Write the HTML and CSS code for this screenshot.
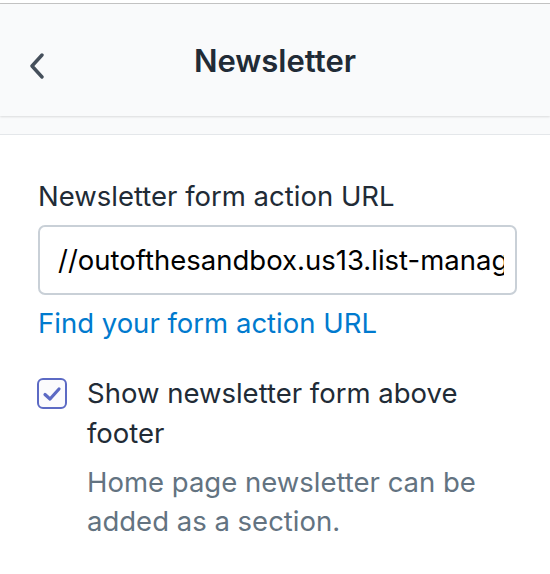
FILE: index.html
```html
<!DOCTYPE html>
<html>
<head>
<meta charset="utf-8">
<link rel="stylesheet" href="styles.css">
</head>
<body>
<div class="topline"></div>
<header class="header">
  <button class="back" aria-label="Back">
    <svg width="16" height="26" viewBox="0 0 16 26"><path d="M13 2 L3 13 L13 24" fill="none" stroke="#454f5b" stroke-width="3.4" stroke-linecap="round" stroke-linejoin="round"/></svg>
  </button>
  <h1 class="title">Newsletter</h1>
</header>
<div class="strip"></div>
<main class="content">
  <label class="label">Newsletter form action URL</label>
  <div class="input"><span class="input-text">//outofthesandbox.us13.list-manage.com/subscribe/post</span></div>
  <a class="link" href="#">Find your form action URL</a>
  <div class="check-row">
    <span class="checkbox">
      <svg width="20" height="16" viewBox="0 0 20 16"><path d="M3 8.5 L8 13 L17 3" fill="none" stroke="#5c6ac4" stroke-width="3.2" stroke-linecap="round" stroke-linejoin="round"/></svg>
    </span>
    <div class="check-text">
      <div class="check-label">Show newsletter form above footer</div>
      <div class="help">Home page newsletter can be added as a section.</div>
    </div>
  </div>
</main>
</body>
</html>
```
FILE: styles.css
```css
html, body {
  margin: 0;
  padding: 0;
  background: #ffffff;
  font-family: Inter, "Liberation Sans", sans-serif;
  color: #212b36;
}
.topline {
  height: 3px;
  background: #fff;
  border-bottom: 1px solid #c4c4c4;
}
.header {
  height: 112px;
  background: #f9fafb;
  display: flex;
  align-items: center;
  justify-content: center;
  position: relative;
  box-shadow: 0 1px 2px rgba(0,0,0,0.12);
  z-index: 1;
}
.back {
  position: absolute;
  left: 29px;
  top: 49px;
  border: 0;
  background: none;
  padding: 0;
  width: 16px;
  height: 26px;
}
.title {
  margin: 0;
  font-size: 31px;
  font-weight: 600;
  color: #212b36;
}
.strip {
  height: 18px;
  background: #f9fafb;
  border-bottom: 1px solid #e4e7ea;
}
.content {
  padding: 43px 33px 0 38px;
  display: flex;
  flex-direction: column;
}
.label {
  font-size: 27.5px;
  line-height: 36px;
  color: #212b36;
}
.input {
  margin-top: 11px;
  height: 70px;
  box-sizing: border-box;
  border: 2px solid #c9d0d7;
  border-radius: 7px;
  padding: 0 11px 0 18px;
  display: flex;
  align-items: center;
  overflow: hidden;
  white-space: nowrap;
}
.input-text {
  font-size: 27.5px;
  color: #000;
  overflow: hidden;
  display: block;
}
.link {
  margin-top: 10px;
  font-size: 27.5px;
  line-height: 36px;
  color: #007ace;
  text-decoration: none;
  align-self: flex-start;
}
.check-row {
  margin-top: 32px;
  display: flex;
  gap: 20px;
}
.checkbox {
  flex: none;
  box-sizing: border-box;
  width: 30px;
  height: 31px;
  margin-top: 5px;
  margin-left: -1px;
  border: 2px solid #5c6ac4;
  border-radius: 6px;
  background: #fbfbfd;
  display: flex;
  align-items: center;
  justify-content: center;
}
.check-text {
  flex: 1;
  min-width: 0;
}
.check-label {
  font-size: 27.5px;
  line-height: 40px;
  color: #212b36;
}
.help {
  margin-top: 10px;
  font-size: 27.5px;
  line-height: 39px;
  color: #637381;
}
```
